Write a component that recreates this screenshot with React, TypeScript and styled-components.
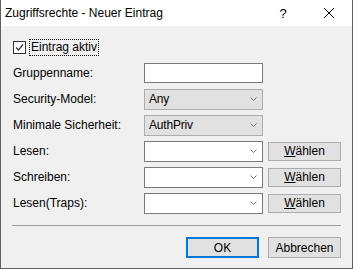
import { Fragment } from "react";
import styled, { createGlobalStyle } from "styled-components";

const GlobalStyle = createGlobalStyle`
  html, body {
    margin: 0;
    padding: 0;
    background: #ffffff;
  }
  body {
    font-family: "Liberation Sans", Arial, sans-serif;
    font-size: 12px;
    color: #000000;
  }
`;

const Window = styled.div`
  width: 353px;
  height: 269px;
  box-sizing: border-box;
  border: 1px solid #5f5f5f;
  border-top: none;
  background: #f0f0f0;
  display: flex;
  flex-direction: column;
`;

const TitleBar = styled.div`
  height: 26px;
  background: #ffffff;
  display: flex;
  align-items: center;
  flex-shrink: 0;
`;

const Title = styled.div`
  flex: 1;
  padding-left: 4px;
  font-size: 12px;
  color: #000000;
  line-height: 26px;
`;

const TitleButton = styled.div`
  width: 46px;
  height: 26px;
  display: flex;
  align-items: center;
  justify-content: center;
  font-size: 13px;
  color: #000;
`;

const Body = styled.div`
  flex: 1;
  display: flex;
  flex-direction: column;
  padding: 14px 11px 0 11px;
`;

const CheckRow = styled.label`
  display: flex;
  align-items: center;
  gap: 4px;
  height: 15px;
  margin-left: 1px;
`;

const CheckBox = styled.span`
  width: 11px;
  height: 11px;
  border: 1px solid #333333;
  background: #ffffff;
  display: flex;
  align-items: center;
  justify-content: center;
`;

const FocusText = styled.span`
  outline: 1px dotted #000;
  outline-offset: 0;
  padding: 0 1px;
  line-height: 15px;
`;

const Form = styled.div`
  display: grid;
  grid-template-columns: 127px 119px 73px;
  column-gap: 5px;
  grid-auto-rows: 20px;
  row-gap: 6px;
  margin-top: 8px;
  align-items: center;
`;

const Label = styled.div`
  grid-column: 1;
  padding-left: 1px;
`;

const TextField = styled.div`
  grid-column: 2;
  height: 20px;
  box-sizing: border-box;
  border: 1px solid #7a7a7a;
  background: #ffffff;
`;

const Combo = styled.div<{ $flat?: boolean }>`
  grid-column: 2;
  height: 21px;
  box-sizing: border-box;
  border: 1px solid ${(p) => (p.$flat ? "#adadad" : "#7a7a7a")};
  background: ${(p) => (p.$flat ? "#e1e1e1" : "#ffffff")};
  display: flex;
  align-items: center;
  padding-left: 4px;
  padding-right: 5px;
`;

const ComboText = styled.span`
  flex: 1;
  letter-spacing: -0.2px;
`;

const PushButton = styled.div<{ $default?: boolean }>`
  height: 19px;
  box-sizing: border-box;
  border: ${(p) => (p.$default ? "2px solid #0078d7" : "1px solid #adadad")};
  background: #e1e1e1;
  display: flex;
  align-items: center;
  justify-content: center;
`;

const Separator = styled.div`
  height: 1px;
  background: #a0a0a0;
  margin-top: 12px;
`;

const Footer = styled.div`
  display: flex;
  justify-content: flex-end;
  gap: 9px;
  margin-top: 11px;
`;

const FooterButton = styled(PushButton)`
  width: 73px;
  height: 21px;
`;

const Chevron = () => (
  <svg width="7" height="4" viewBox="0 0 7 4">
    <path d="M0.5 0.5 L3.5 3.5 L6.5 0.5" fill="none" stroke="#707070" strokeWidth="1" />
  </svg>
);

const rows = ["Lesen:", "Schreiben:", "Lesen(Traps):"];

export default function App() {
  return (
    <>
      <GlobalStyle />
      <Window>
        <TitleBar>
          <Title>Zugriffsrechte - Neuer Eintrag</Title>
          <TitleButton>?</TitleButton>
          <TitleButton>
            <svg width="10" height="10" viewBox="0 0 10 10">
              <path d="M0 0 L10 10 M10 0 L0 10" stroke="#000" strokeWidth="1" />
            </svg>
          </TitleButton>
        </TitleBar>
        <Body>
          <CheckRow>
            <CheckBox>
              <svg width="9" height="9" viewBox="0 0 9 9">
                <path d="M1 4.5 L3.5 7 L8 1.5" fill="none" stroke="#333" strokeWidth="1.2" />
              </svg>
            </CheckBox>
            <FocusText>Eintrag aktiv</FocusText>
          </CheckRow>
          <Form>
            <Label>Gruppenname:</Label>
            <TextField />
            <div />
            <Label>Security-Model:</Label>
            <Combo $flat>
              <ComboText>Any</ComboText>
              <Chevron />
            </Combo>
            <div />
            <Label>Minimale Sicherheit:</Label>
            <Combo $flat>
              <ComboText>AuthPriv</ComboText>
              <Chevron />
            </Combo>
            <div />
            {rows.map((r) => (
              <Fragment key={r}>
                <Label>{r}</Label>
                <Combo>
                  <ComboText />
                  <Chevron />
                </Combo>
                <PushButton>
                  <span>
                    <u>W</u>ählen
                  </span>
                </PushButton>
              </Fragment>
            ))}
          </Form>
          <Separator />
          <Footer>
            <FooterButton $default>OK</FooterButton>
            <FooterButton>Abbrechen</FooterButton>
          </Footer>
        </Body>
      </Window>
    </>
  );
}
